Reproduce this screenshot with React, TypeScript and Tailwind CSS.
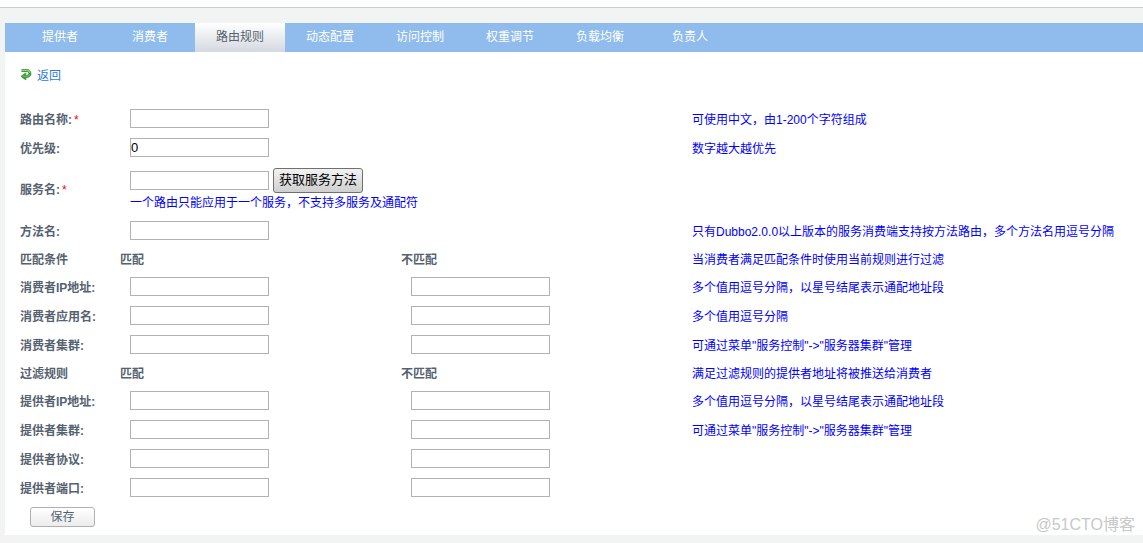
import { useState } from "react";
import type { ReactNode } from "react";

const tabs = ["提供者", "消费者", "路由规则", "动态配置", "访问控制", "权重调节", "负载均衡", "负责人"];

const rowClass =
  "grid grid-cols-[100px_minmax(0,281fr)_minmax(0,291fr)_minmax(0,451fr)] items-center";

function TextBox({ id, label, value = "" }: { id: string; label?: string; value?: string }) {
  return (
    <input
      id={id}
      type="text"
      aria-label={label}
      defaultValue={value}
      className="block h-[19px] w-[139px] border border-[#b2b2b2] bg-white text-[13px] leading-4 text-black outline-none focus:border-[#8fbcec]"
    />
  );
}

function Label({ id, text, required }: { id: string; text: string; required?: boolean }) {
  return (
    <label htmlFor={id} className="pt-0.5 font-bold">
      {text}:{required && <span className="ml-0.5 font-normal text-[#ff0000]">*</span>}
    </label>
  );
}

function Hint({ children }: { children: ReactNode }) {
  return <p className="pt-0.5 whitespace-nowrap text-[#0000ff]">{children}</p>;
}

function SingleRow({
  id,
  text,
  required,
  value,
  hint,
}: {
  id: string;
  text: string;
  required?: boolean;
  value?: string;
  hint: string;
}) {
  return (
    <div className={`${rowClass} h-[29px]`}>
      <Label id={id} text={text} required={required} />
      <div className="col-span-2 pl-2.5">
        <TextBox id={id} value={value} />
      </div>
      <Hint>{hint}</Hint>
    </div>
  );
}

function PairRow({ id, text, hint }: { id: string; text: string; hint?: string }) {
  return (
    <div className={`${rowClass} h-[29px]`}>
      <Label id={id} text={text} />
      <div className="pl-2.5">
        <TextBox id={id} />
      </div>
      <div className="pl-2.5">
        <TextBox id={`${id}-not`} label={`${text} 不匹配`} />
      </div>
      {hint && <Hint>{hint}</Hint>}
    </div>
  );
}

function SectionRow({ title, hint }: { title: string; hint: string }) {
  return (
    <div className={`${rowClass} h-[27px]`}>
      <h2 className="pt-0.5 font-bold">{title}</h2>
      <h3 className="pt-0.5 font-bold">匹配</h3>
      <h3 className="pt-0.5 font-bold">不匹配</h3>
      <Hint>{hint}</Hint>
    </div>
  );
}

function BackIcon() {
  return (
    <svg width="12" height="16" viewBox="0 0 12 16" aria-hidden="true">
      <path d="M1.5 2.6H7A2.9 2.9 0 0 1 7 8.4H5" fill="none" stroke="#3f9a3b" strokeWidth="3" />
      <path d="M5.8 5V11.8L1 8.4Z" fill="#3f9a3b" stroke="#3f9a3b" strokeLinejoin="round" />
      <path d="M2 2.4H7A2.9 2.9 0 0 1 9.8 5" fill="none" stroke="#8fd486" strokeWidth="1.2" />
      <path d="M2.6 8.4H7.2A2.6 2.6 0 0 0 9.6 6.4" fill="none" stroke="#62bd57" strokeWidth="1.2" />
    </svg>
  );
}

export default function App() {
  const [active, setActive] = useState("路由规则");

  return (
    <div className="relative min-h-screen bg-[#f2f4f4] pb-2 font-['Liberation_Sans','Noto_Sans_CJK_SC',sans-serif] text-xs leading-4 text-[#556270]">
      <header className="h-2 border-b border-[#cccccc] bg-white" />
      <main className="relative mt-[15px] ml-[5px] bg-white pb-2">
        <nav className="flex h-[29px] bg-[#8fbcec] pl-2.5">
          {tabs.map((tab) => (
            <a
              key={tab}
              href="#"
              onClick={(event) => {
                event.preventDefault();
                setActive(tab);
              }}
              aria-current={tab === active ? "page" : undefined}
              className={
                tab === active
                  ? "w-[90px] bg-linear-to-b from-white to-[#d4d9e0] pt-1.5 text-center"
                  : "w-[90px] pt-1.5 text-center text-white"
              }
            >
              {tab}
            </a>
          ))}
        </nav>

        <div className="pt-4 pl-[15px]">
          <a href="#" className="flex h-4 w-fit items-center gap-[5px] text-[#2b7bd3]">
            <BackIcon />
            返回
          </a>

          <form className="mt-5" onSubmit={(event) => event.preventDefault()}>
            <SingleRow id="name" text="路由名称" required hint="可使用中文，由1-200个字符组成" />
            <SingleRow id="priority" text="优先级" value="0" hint="数字越大越优先" />
            <div className={`${rowClass} h-[54px]`}>
              <Label id="service" text="服务名" required />
              <div className="col-span-3 pl-2.5">
                <div className="flex items-center gap-1">
                  <TextBox id="service" />
                  <button
                    type="button"
                    className="h-[25px] w-[90px] rounded-[3px] border border-[#707070] bg-linear-to-b from-[#f2f2f2] to-[#cfcfcf] text-[13px] leading-5 whitespace-nowrap text-black"
                  >
                    获取服务方法
                  </button>
                </div>
                <Hint>一个路由只能应用于一个服务，不支持多服务及通配符</Hint>
              </div>
            </div>
            <SingleRow
              id="method"
              text="方法名"
              hint="只有Dubbo2.0.0以上版本的服务消费端支持按方法路由，多个方法名用逗号分隔"
            />
            <SectionRow title="匹配条件" hint="当消费者满足匹配条件时使用当前规则进行过滤" />
            <PairRow id="consumer-ip" text="消费者IP地址" hint="多个值用逗号分隔，以星号结尾表示通配地址段" />
            <PairRow id="consumer-app" text="消费者应用名" hint="多个值用逗号分隔" />
            <PairRow id="consumer-cluster" text="消费者集群" hint={'可通过菜单"服务控制"->"服务器集群"管理'} />
            <SectionRow title="过滤规则" hint="满足过滤规则的提供者地址将被推送给消费者" />
            <PairRow id="provider-ip" text="提供者IP地址" hint="多个值用逗号分隔，以星号结尾表示通配地址段" />
            <PairRow id="provider-cluster" text="提供者集群" hint={'可通过菜单"服务控制"->"服务器集群"管理'} />
            <PairRow id="provider-protocol" text="提供者协议" />
            <PairRow id="provider-port" text="提供者端口" />
            <button
              type="submit"
              className="mt-[5px] ml-2.5 block h-5 w-[65px] rounded-[3px] border border-[#b0b0b0] bg-linear-to-b from-white to-[#ececec] text-center"
            >
              保存
            </button>
          </form>
        </div>
        <p className="absolute right-2 bottom-0 text-base leading-5 text-[#c8c8c8]">@51CTO博客</p>
      </main>
    </div>
  );
}
